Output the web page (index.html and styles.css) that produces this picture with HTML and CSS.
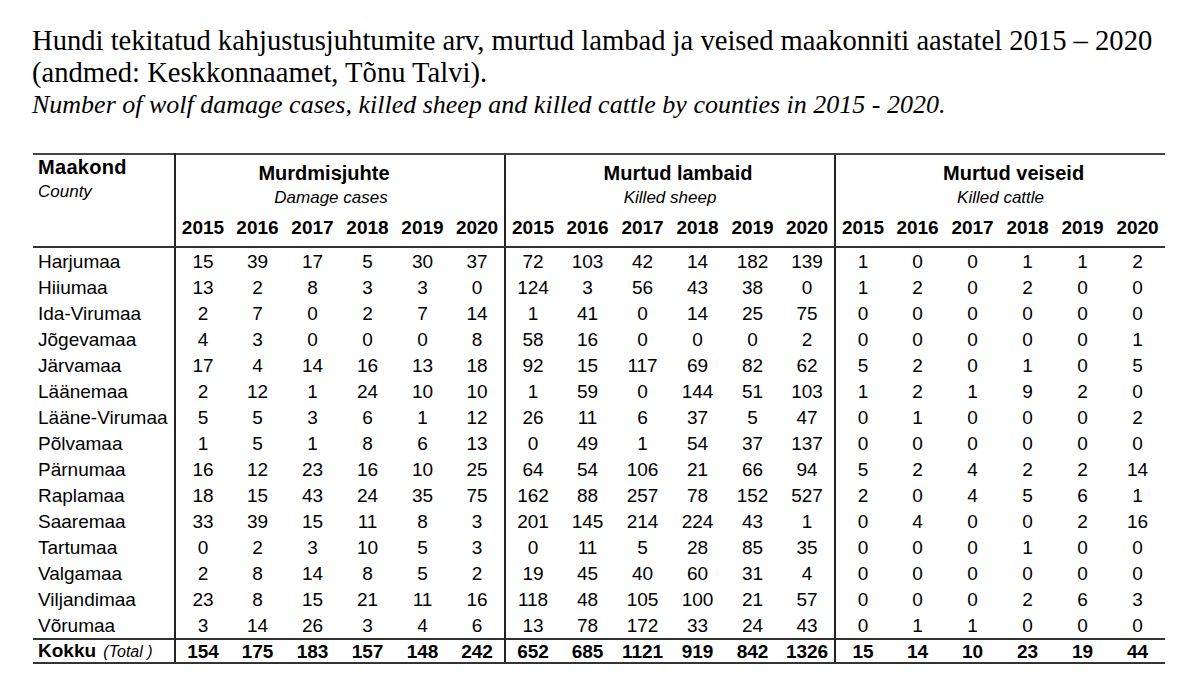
FILE: index.html
```html
<!DOCTYPE html>
<html lang="et">
<head>
<meta charset="utf-8">
<title>Hundi kahjustusjuhtumid</title>
<link rel="stylesheet" href="styles.css">
</head>
<body>
<div class="page">
  <div class="caption">
    <p class="title-et">Hundi tekitatud kahjustusjuhtumite arv, murtud lambad ja veised maakonniti aastatel 2015 – 2020<br>(andmed: Keskkonnaamet, Tõnu Talvi).</p>
    <p class="title-en">Number of wolf damage cases, killed sheep and killed cattle by counties in 2015 - 2020.</p>
  </div>
  <table class="data">
    <colgroup>
      <col class="c-name">
      <col><col><col><col><col><col>
      <col><col><col><col><col><col>
      <col><col><col><col><col><col>
    </colgroup>
    <thead>
      <tr class="h-top">
        <th class="county" rowspan="2"><div class="cn-et">Maakond</div><div class="cn-en">County</div></th>
        <th class="grp" colspan="6"><div class="gt s-l16">Murdmisjuhte</div><div class="gs s-l9">Damage cases</div></th>
        <th class="grp sep" colspan="6"><div class="gt s-r8">Murtud lambaid</div><div class="gs">Killed sheep</div></th>
        <th class="grp sep" colspan="6"><div class="gt s-r13">Murtud veiseid</div><div class="gs">Killed cattle</div></th>
      </tr>
      <tr class="h-years">
        <th>2015</th><th>2016</th><th>2017</th><th>2018</th><th>2019</th><th>2020</th>
        <th class="sep">2015</th><th>2016</th><th>2017</th><th>2018</th><th>2019</th><th>2020</th>
        <th class="sep">2015</th><th>2016</th><th>2017</th><th>2018</th><th>2019</th><th>2020</th>
      </tr>
    </thead>
    <tbody>
      <tr><td class="name">Harjumaa</td><td>15</td><td>39</td><td>17</td><td>5</td><td>30</td><td>37</td><td class="sep">72</td><td>103</td><td>42</td><td>14</td><td>182</td><td>139</td><td class="sep">1</td><td>0</td><td>0</td><td>1</td><td>1</td><td>2</td></tr>
      <tr><td class="name">Hiiumaa</td><td>13</td><td>2</td><td>8</td><td>3</td><td>3</td><td>0</td><td class="sep">124</td><td>3</td><td>56</td><td>43</td><td>38</td><td>0</td><td class="sep">1</td><td>2</td><td>0</td><td>2</td><td>0</td><td>0</td></tr>
      <tr><td class="name">Ida-Virumaa</td><td>2</td><td>7</td><td>0</td><td>2</td><td>7</td><td>14</td><td class="sep">1</td><td>41</td><td>0</td><td>14</td><td>25</td><td>75</td><td class="sep">0</td><td>0</td><td>0</td><td>0</td><td>0</td><td>0</td></tr>
      <tr><td class="name">Jõgevamaa</td><td>4</td><td>3</td><td>0</td><td>0</td><td>0</td><td>8</td><td class="sep">58</td><td>16</td><td>0</td><td>0</td><td>0</td><td>2</td><td class="sep">0</td><td>0</td><td>0</td><td>0</td><td>0</td><td>1</td></tr>
      <tr><td class="name">Järvamaa</td><td>17</td><td>4</td><td>14</td><td>16</td><td>13</td><td>18</td><td class="sep">92</td><td>15</td><td>117</td><td>69</td><td>82</td><td>62</td><td class="sep">5</td><td>2</td><td>0</td><td>1</td><td>0</td><td>5</td></tr>
      <tr><td class="name">Läänemaa</td><td>2</td><td>12</td><td>1</td><td>24</td><td>10</td><td>10</td><td class="sep">1</td><td>59</td><td>0</td><td>144</td><td>51</td><td>103</td><td class="sep">1</td><td>2</td><td>1</td><td>9</td><td>2</td><td>0</td></tr>
      <tr><td class="name">Lääne-Virumaa</td><td>5</td><td>5</td><td>3</td><td>6</td><td>1</td><td>12</td><td class="sep">26</td><td>11</td><td>6</td><td>37</td><td>5</td><td>47</td><td class="sep">0</td><td>1</td><td>0</td><td>0</td><td>0</td><td>2</td></tr>
      <tr><td class="name">Põlvamaa</td><td>1</td><td>5</td><td>1</td><td>8</td><td>6</td><td>13</td><td class="sep">0</td><td>49</td><td>1</td><td>54</td><td>37</td><td>137</td><td class="sep">0</td><td>0</td><td>0</td><td>0</td><td>0</td><td>0</td></tr>
      <tr><td class="name">Pärnumaa</td><td>16</td><td>12</td><td>23</td><td>16</td><td>10</td><td>25</td><td class="sep">64</td><td>54</td><td>106</td><td>21</td><td>66</td><td>94</td><td class="sep">5</td><td>2</td><td>4</td><td>2</td><td>2</td><td>14</td></tr>
      <tr><td class="name">Raplamaa</td><td>18</td><td>15</td><td>43</td><td>24</td><td>35</td><td>75</td><td class="sep">162</td><td>88</td><td>257</td><td>78</td><td>152</td><td>527</td><td class="sep">2</td><td>0</td><td>4</td><td>5</td><td>6</td><td>1</td></tr>
      <tr><td class="name">Saaremaa</td><td>33</td><td>39</td><td>15</td><td>11</td><td>8</td><td>3</td><td class="sep">201</td><td>145</td><td>214</td><td>224</td><td>43</td><td>1</td><td class="sep">0</td><td>4</td><td>0</td><td>0</td><td>2</td><td>16</td></tr>
      <tr><td class="name">Tartumaa</td><td>0</td><td>2</td><td>3</td><td>10</td><td>5</td><td>3</td><td class="sep">0</td><td>11</td><td>5</td><td>28</td><td>85</td><td>35</td><td class="sep">0</td><td>0</td><td>0</td><td>1</td><td>0</td><td>0</td></tr>
      <tr><td class="name">Valgamaa</td><td>2</td><td>8</td><td>14</td><td>8</td><td>5</td><td>2</td><td class="sep">19</td><td>45</td><td>40</td><td>60</td><td>31</td><td>4</td><td class="sep">0</td><td>0</td><td>0</td><td>0</td><td>0</td><td>0</td></tr>
      <tr><td class="name">Viljandimaa</td><td>23</td><td>8</td><td>15</td><td>21</td><td>11</td><td>16</td><td class="sep">118</td><td>48</td><td>105</td><td>100</td><td>21</td><td>57</td><td class="sep">0</td><td>0</td><td>0</td><td>2</td><td>6</td><td>3</td></tr>
      <tr><td class="name">Võrumaa</td><td>3</td><td>14</td><td>26</td><td>3</td><td>4</td><td>6</td><td class="sep">13</td><td>78</td><td>172</td><td>33</td><td>24</td><td>43</td><td class="sep">0</td><td>1</td><td>1</td><td>0</td><td>0</td><td>0</td></tr>
    </tbody>
    <tfoot>
      <tr class="total"><td class="name"><b>Kokku</b> <i class="tot-en">(Total )</i></td><td>154</td><td>175</td><td>183</td><td>157</td><td>148</td><td>242</td><td class="sep">652</td><td>685</td><td>1121</td><td>919</td><td>842</td><td>1326</td><td class="sep">15</td><td>14</td><td>10</td><td>23</td><td>19</td><td>44</td></tr>
    </tfoot>
  </table>
</div>
</body>
</html>
```

FILE: styles.css
```css
html, body {
  margin: 0;
  padding: 0;
  background: #ffffff;
  color: #000000;
}

.page {
  padding: 25px 0 0 32px;
}

.caption p {
  margin: 0;
  font-family: "Liberation Serif", "Times New Roman", serif;
  white-space: nowrap;
}

.title-et {
  font-size: 28.6px;
  line-height: 32px;
}

.title-en {
  font-size: 26px;
  line-height: 32px;
  font-style: italic;
  margin-top: 2px;
}

.data {
  margin: 32px 0 0 1px;
  border-collapse: collapse;
  table-layout: fixed;
  width: 1132px;
  font-family: "Liberation Sans", Arial, sans-serif;
  font-size: 19px;
  color: #000;
}

.data col {
  width: 55px;
}

.data col.c-name {
  width: 142px;
}

.data th,
.data td {
  padding: 0;
  text-align: center;
  white-space: nowrap;
}

.data .sep {
  border-left: 2px solid #222;
}

.h-top th {
  border-top: 2px solid #444;
  vertical-align: top;
}

.county {
  text-align: left !important;
  padding-left: 5px !important;
  border-right: 2px solid #222;
  border-bottom: 2px solid #333;
}

.cn-et {
  font-size: 20px;
  font-weight: bold;
  line-height: 24px;
  letter-spacing: 0.3px;
}

.cn-en {
  font-size: 17px;
  font-style: italic;
  font-weight: normal;
  line-height: 25px;
}

.grp {
  padding: 6px 0 5px 0 !important;
}

.gt {
  font-size: 20px;
  font-weight: bold;
  line-height: 25px;
}

.gs {
  font-size: 17px;
  font-style: italic;
  font-weight: normal;
  line-height: 24px;
}

.s-l16 { padding-right: 32px; }
.s-l9 { padding-right: 18px; }
.s-r8 { padding-left: 16px; }
.s-r13 { padding-left: 26px; }

.h-years th {
  font-weight: bold;
  line-height: 26px;
  padding-bottom: 5px;
  border-bottom: 2px solid #333;
}

.data tbody td {
  line-height: 24px;
  padding-top: 2px;
}

.data td.name {
  text-align: left;
  padding-left: 5px;
  border-right: 2px solid #222;
}

.total td {
  font-weight: bold;
  line-height: 21px;
  padding-top: 0;
  border-top: 2px solid #333;
  border-bottom: 2px solid #333;
}

.tot-en {
  font-weight: normal;
  font-size: 16px;
  margin-left: 2px;
}
```
